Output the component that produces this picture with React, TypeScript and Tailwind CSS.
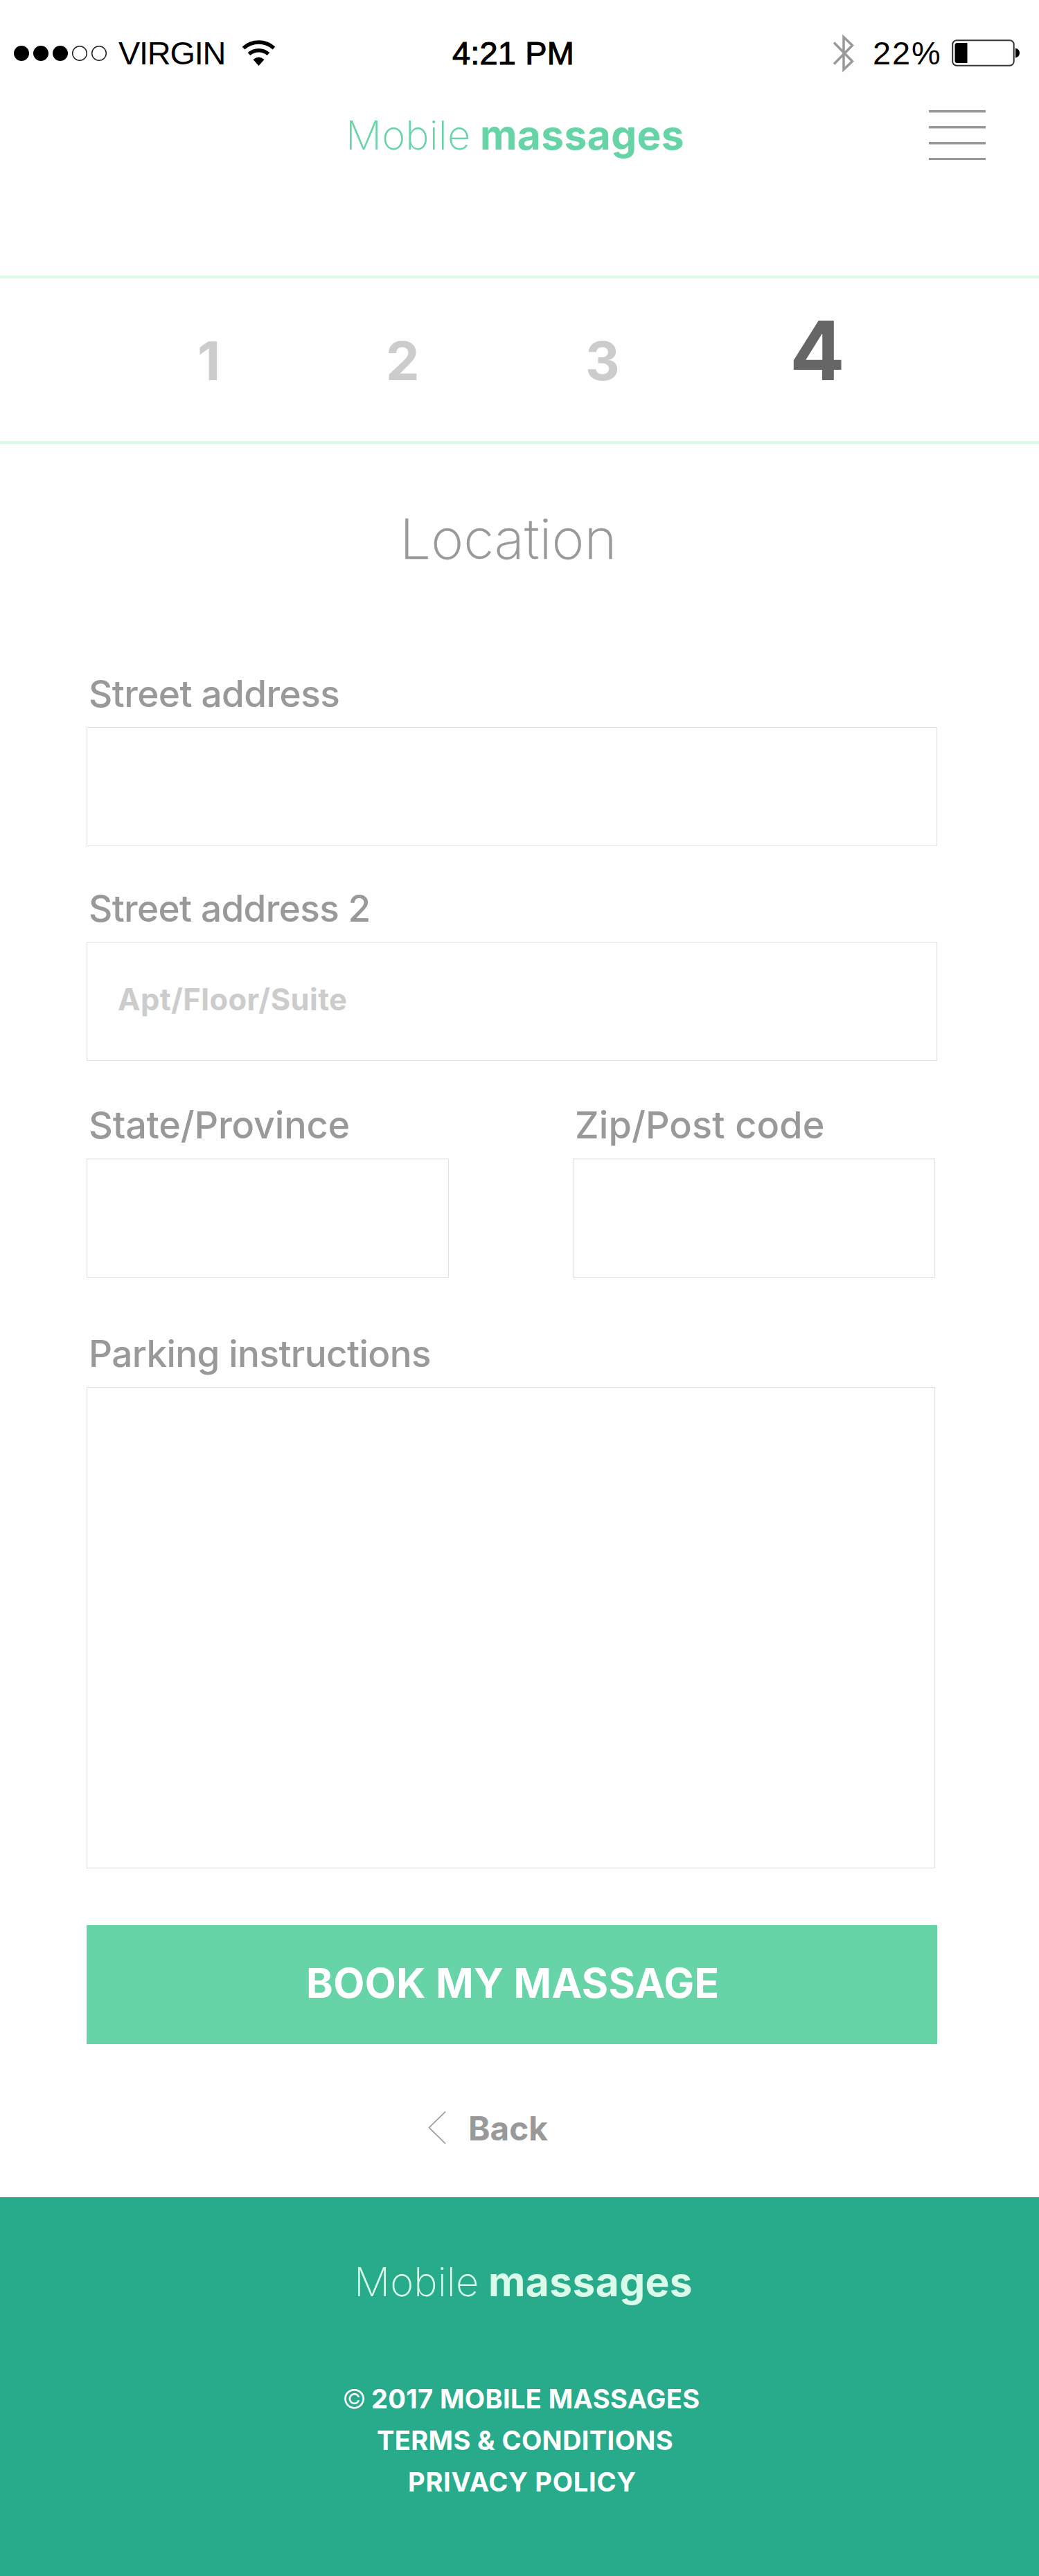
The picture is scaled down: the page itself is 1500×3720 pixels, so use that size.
import React from "react";

function StatusBar() {
  return (
    <div className="flex h-[154px] items-center font-['Liberation_Sans',sans-serif] text-[46.9px] leading-none text-black">
      <svg className="ml-[19px] shrink-0" width="136" height="24" viewBox="0 0 136 24">
        <circle cx="12" cy="12" r="11" />
        <circle cx="40" cy="12" r="11" />
        <circle cx="68" cy="12" r="11" />
        <circle cx="96" cy="12" r="10.3" fill="none" stroke="#222" strokeWidth="1.5" />
        <circle cx="124" cy="12" r="10.3" fill="none" stroke="#222" strokeWidth="1.5" />
      </svg>
      <span className="ml-4 w-[178px] shrink-0 whitespace-nowrap tracking-[-1.25px]">VIRGIN</span>
      <svg className="shrink-0" width="50" height="38" viewBox="0 0 50 38">
        <path d="M2.5 11.5 A33 33 0 0 1 46.5 11.5" fill="none" stroke="#000" strokeWidth="5.5" />
        <path d="M10.5 20 A21 21 0 0 1 38.5 20" fill="none" stroke="#000" strokeWidth="5.5" />
        <path d="M16.5 28 Q24.5 21 32.5 28 L24.5 37 Z" />
      </svg>
      <span className="ml-[254px] w-[549px] shrink-0 whitespace-nowrap tracking-[0.2px] [-webkit-text-stroke:1.1px_#000]">4:21 PM</span>
      <svg className="shrink-0" width="32" height="56" viewBox="0 0 32 56">
        <path d="M2 12.5 L28.5 39.5 L16 51.5 V4.5 L28.5 16.5 L2 43.5" fill="none" stroke="#999" strokeWidth="3.5" />
      </svg>
      <span className="ml-[26px] w-[114px] shrink-0 whitespace-nowrap tracking-[1.9px]">22%</span>
      <svg className="shrink-0" width="100" height="40" viewBox="0 0 100 40">
        <rect x="1.2" y="1.2" width="88.5" height="36.6" rx="6" fill="none" stroke="#333" strokeWidth="2" />
        <path d="M8 5 H22.5 V34 H8 Q4.5 34 4.5 30.5 V8.5 Q4.5 5 8 5 Z" />
        <path d="M92 12.5 Q98 14 98 19.5 Q98 25 92 26.5 Z" />
      </svg>
    </div>
  );
}

function Logo({ className }: { className: string }) {
  return (
    <div className={"flex whitespace-nowrap leading-[60px] " + className}>
      <span className="w-[194px] shrink-0 text-[58px] font-extralight tracking-[0.1px]">Mobile</span>
      <span className="text-[58.6px] font-bold tracking-[0.4px]">massages</span>
    </div>
  );
}

function Header() {
  return (
    <header className="flex h-[244px] items-start">
      <Logo className="ml-[499px] mt-[11px] w-[842px] text-[#66d4a6]" />
      <svg className="mt-[5px]" width="82" height="73" viewBox="0 0 82 73" fill="#999">
        <rect y="0" width="82" height="3.5" />
        <rect y="23" width="82" height="3.5" />
        <rect y="46" width="82" height="3.5" />
        <rect y="69" width="82" height="3" />
      </svg>
    </header>
  );
}

function Steps() {
  return (
    <nav className="grid h-[243px] grid-cols-[272px_288px_295px_auto] items-baseline border-y-4 border-[#d8fbe6] pl-[285px] pt-[45px] text-[77px] font-bold leading-none text-[#ccc]">
      <span>1</span>
      <span>2</span>
      <span>3</span>
      <span className="text-[118px] leading-[119px] text-[#666]">4</span>
    </nav>
  );
}

function Field({
  label,
  labelClass = "",
  className,
  boxClass = "h-[172px]",
  children,
}: {
  label: string;
  labelClass?: string;
  className: string;
  boxClass?: string;
  children?: React.ReactNode;
}) {
  return (
    <div className={className}>
      <div className={"mb-[18px] whitespace-nowrap pl-[3px] font-medium leading-[60px] text-[#999] " + labelClass}>
        {label}
      </div>
      <div className={"flex items-center border border-[#e0e0e0] " + boxClass}>{children}</div>
    </div>
  );
}

export default function App() {
  return (
    <div className="h-[3720px] w-[1500px] overflow-hidden bg-[#fefefe] font-['Inter',sans-serif]">
      <StatusBar />
      <Header />
      <Steps />
      <main className="h-[2532px] pl-[125px]">
        <h1 className="ml-[452px] pt-[92px] text-[80px] font-extralight leading-[90px] tracking-[0.1px] text-[#999] [-webkit-text-stroke:0.4px_#999]">
          Location
        </h1>
        <Field label="Street address" labelClass="text-[53.1px] tracking-[-0.57px]" className="mt-[149px] w-[1228px]" />
        <Field label="Street address 2" labelClass="text-[53.1px] tracking-[-0.65px]" className="mt-[60px] w-[1228px]">
          <span className="pb-[5px] pl-[44px] text-[43.5px] font-bold leading-none tracking-[0.4px] text-[#ccc]">Apt/Floor/Suite</span>
        </Field>
        <div className="mt-[63px] flex gap-[179px]">
          <Field label="State/Province" labelClass="text-[54px] tracking-[-0.2px]" className="w-[523px]" />
          <Field label="Zip/Post code" labelClass="text-[54px] tracking-[0.1px]" className="w-[523px]" />
        </div>
        <Field
          label="Parking instructions"
          labelClass="text-[53.1px] tracking-[-0.63px]"
          className="mt-[80px] w-[1225px]"
          boxClass="h-[695px]"
        />
        <button className="mt-[82px] flex h-[172px] w-[1228px] items-center whitespace-nowrap bg-[#66d4a6] pb-[3px] pl-[317px] text-[58.6px] font-bold leading-none tracking-[0.4px] text-white">
          BOOK MY MASSAGE
        </button>
        <div className="ml-[493px] mt-[92px] flex h-[60px] items-start">
          <svg className="mt-[5px]" width="26" height="47" viewBox="0 0 26 47">
            <path d="M25 0.5 L1.5 23.5 L25 46.5" fill="none" stroke="#999" strokeWidth="1.7" />
          </svg>
          <span className="ml-8 text-[47.7px] font-bold leading-[60px] text-[#999]">Back</span>
        </div>
      </main>
      <footer className="h-[547px] bg-[#28ab8b] pt-[92px] text-white">
        <Logo className="ml-[511px] text-[#dafbe9]" />
        <div className="mt-[109px] whitespace-nowrap text-[38.1px] font-bold leading-[60px]">
          <p className="ml-[494px] flex">
            <span className="w-[42px] shrink-0 font-light">©</span>
            <span className="tracking-[0.34px]">2017 MOBILE MASSAGES</span>
          </p>
          <p className="ml-[544px] tracking-[0.35px]">TERMS &amp; CONDITIONS</p>
          <p className="ml-[589px] tracking-[0.71px]">PRIVACY POLICY</p>
        </div>
      </footer>
    </div>
  );
}
